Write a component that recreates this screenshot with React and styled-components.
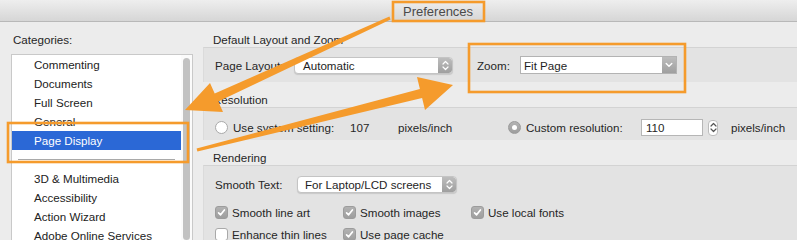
import React from 'react';
import styled, { createGlobalStyle } from 'styled-components';

const Global = createGlobalStyle`
  html, body { margin: 0; padding: 0; background: #ececec; }
  body {
    font-family: "Liberation Sans", Arial, sans-serif;
    font-size: 11.6px;
    color: #262626;
    overflow: hidden;
  }
  #root { width: 797px; height: 240px; }
`;

const Window = styled.div`
  position: relative;
  width: 797px;
  height: 240px;
  overflow: hidden;
  background: #ececec;
  display: flex;
  flex-direction: column;
`;

const TitleBar = styled.div`
  height: 22px;
  flex-shrink: 0;
  box-sizing: border-box;
  border-bottom: 1px solid #b8b8b8;
  background: linear-gradient(#eeeeee, #d6d6d6);
  display: flex;
  align-items: center;
  padding: 2px 0 0 403px;
  font-size: 13px;
  color: #4a4a4a;
`;

const Body = styled.div`
  flex: 1;
  min-height: 0;
  display: flex;
`;

const Sidebar = styled.div`
  width: 203px;
  flex-shrink: 0;
  box-sizing: border-box;
  padding-left: 11px;
  display: flex;
  flex-direction: column;
`;

const SideHeading = styled.div`
  height: 25px;
  flex-shrink: 0;
  box-sizing: border-box;
  padding: 11px 0 0 2px;
  line-height: 14px;
  margin-bottom: 7px;
`;

const List = styled.div`
  width: 182px;
  flex: 1;
  min-height: 0;
  box-sizing: border-box;
  background: #fff;
  border: 1px solid #c9c9c9;
  border-bottom: none;
  display: flex;
  overflow: hidden;
`;

const Items = styled.div`
  flex: 1;
  display: flex;
  flex-direction: column;
`;

const Item = styled.div`
  height: 19px;
  flex-shrink: 0;
  line-height: 19px;
  padding-left: 22px;
  white-space: nowrap;
  background: ${p => (p.$selected ? '#2b68d6' : 'transparent')};
  color: ${p => (p.$selected ? '#fff' : '#222')};
`;

const Separator = styled.div`
  height: 19px;
  flex-shrink: 0;
  display: flex;
  align-items: center;
  padding: 0 6px;
  &::after {
    content: '';
    flex: 1;
    height: 1px;
    background: #a9a9a9;
  }
`;

const ScrollTrack = styled.div`
  width: 11px;
  flex-shrink: 0;
  background: #fbfbfb;
  padding: 3px 0 0 2px;
  box-sizing: border-box;
`;

const ScrollThumb = styled.div`
  width: 7px;
  height: 100%;
  border-radius: 4px;
  background: #c2c2c2;
`;

const Main = styled.div`
  flex: 1;
  display: flex;
  flex-direction: column;
`;

const SectionLabel = styled.div`
  height: 25px;
  flex-shrink: 0;
  box-sizing: border-box;
  padding: 11px 0 0 10px;
  line-height: 14px;
  white-space: nowrap;
`;

const Group = styled.div`
  height: ${p => p.$h}px;
  flex-shrink: 0;
  box-sizing: border-box;
  background: #e3e3e3;
  border-top: 1px solid #d3d3d3;
  border-left: 1px solid #dbdbdb;
  padding: ${p => p.$pt || 0}px 0 0 11px;
  display: flex;
  flex-direction: column;
  justify-content: ${p => (p.$center ? 'center' : 'flex-start')};
`;

const Row = styled.div`
  display: flex;
  align-items: center;
  height: ${p => p.$h || 17}px;
  flex-shrink: 0;
  white-space: nowrap;
`;

const Cell = styled.div`
  width: ${p => p.$w}px;
  margin-left: ${p => p.$ml || 0}px;
  flex-shrink: 0;
  display: flex;
  align-items: center;
  gap: ${p => p.$gap || 0}px;
  white-space: nowrap;
`;

const SelectBox = styled.div`
  width: ${p => p.$w}px;
  height: ${p => p.$h}px;
  margin-left: ${p => p.$ml || 0}px;
  flex-shrink: 0;
  box-sizing: border-box;
  background: #fff;
  border: 1px solid ${p => (p.$square ? '#b3b3b3' : '#c4c4c4')};
  border-radius: ${p => (p.$square ? 0 : 4)}px;
  box-shadow: ${p => (p.$square ? 'none' : '0 1px 1px rgba(0,0,0,0.12)')};
  display: flex;
  align-items: stretch;
  overflow: hidden;
`;

const SelectText = styled.span`
  flex: 1;
  padding-left: ${p => p.$pl}px;
  display: flex;
  align-items: center;
  color: #1e1e1e;
`;

const SelectButton = styled.span`
  width: 14px;
  flex-shrink: 0;
  background: linear-gradient(#bdbdbd, #9f9f9f);
  border-radius: ${p => (p.$square ? '0' : '0 3px 3px 0')};
  display: flex;
  align-items: center;
  justify-content: center;
`;

const Radio = styled.span`
  width: 13px;
  height: 13px;
  box-sizing: border-box;
  border-radius: 50%;
  flex-shrink: 0;
  display: flex;
  align-items: center;
  justify-content: center;
  background: ${p => (p.$on ? 'linear-gradient(#b3b3b3,#9d9d9d)' : '#fff')};
  border: 1px solid ${p => (p.$on ? '#9a9a9a' : '#a9a9a9')};
  &::after {
    content: '';
    display: ${p => (p.$on ? 'block' : 'none')};
    width: 5px;
    height: 5px;
    border-radius: 50%;
    background: #fff;
  }
`;

const TextInput = styled.div`
  width: 62px;
  height: 17px;
  box-sizing: border-box;
  background: #fff;
  border: 1px solid #b6b6b6;
  padding-left: 4px;
  display: flex;
  align-items: center;
  flex-shrink: 0;
`;

const Stepper = styled.div`
  width: 10px;
  height: 16px;
  box-sizing: border-box;
  margin-left: 5px;
  background: #fff;
  border: 1px solid #bcbcbc;
  border-radius: 4px;
  display: flex;
  align-items: center;
  justify-content: center;
  flex-shrink: 0;
`;

const CheckGrid = styled.div`
  margin-top: 8px;
  display: grid;
  grid-template-columns: repeat(3, 128px);
  grid-auto-rows: 22px;
`;

const CheckItem = styled.div`
  display: flex;
  align-items: center;
  gap: 4px;
  white-space: nowrap;
`;

const Box = styled.span`
  width: 13px;
  height: 13px;
  box-sizing: border-box;
  border-radius: 3px;
  flex-shrink: 0;
  display: flex;
  align-items: center;
  justify-content: center;
  background: ${p => (p.$on ? 'linear-gradient(#b2b2b2,#9e9e9e)' : '#fff')};
  border: 1px solid ${p => (p.$on ? '#9c9c9c' : '#a9a9a9')};
`;

const Overlay = styled.svg`
  position: absolute;
  left: 0;
  top: 0;
  width: 797px;
  height: 240px;
  pointer-events: none;
`;

const UpDown = ({ color = '#fff' }) => (
  <svg width="7" height="11" viewBox="0 0 7 11">
    <path d="M1 4 L3.5 1.5 L6 4 M1 7 L3.5 9.5 L6 7" fill="none" stroke={color} strokeWidth="1.2" strokeLinecap="round" strokeLinejoin="round" />
  </svg>
);

const Down = () => (
  <svg width="8" height="6" viewBox="0 0 8 6">
    <path d="M1.2 1.5 L4 4.3 L6.8 1.5" fill="none" stroke="#fff" strokeWidth="1.4" strokeLinecap="round" strokeLinejoin="round" />
  </svg>
);

const Check = () => (
  <svg width="9" height="9" viewBox="0 0 9 9">
    <path d="M1.6 4.8 L3.6 6.8 L7.4 2" fill="none" stroke="#fff" strokeWidth="1.7" strokeLinecap="round" strokeLinejoin="round" />
  </svg>
);

const Select = ({ w, h, ml, pl, square, label, single }) => (
  <SelectBox $w={w} $h={h} $ml={ml} $square={square}>
    <SelectText $pl={pl}>{label}</SelectText>
    <SelectButton $square={square}>{single ? <Down /> : <UpDown />}</SelectButton>
  </SelectBox>
);

const categories = [
  { name: 'Commenting' },
  { name: 'Documents' },
  { name: 'Full Screen' },
  { name: 'General' },
  { name: 'Page Display', selected: true },
  { sep: true },
  { name: '3D & Multimedia' },
  { name: 'Accessibility' },
  { name: 'Action Wizard' },
  { name: 'Adobe Online Services' },
];

const checks = [
  { label: 'Smooth line art', on: true },
  { label: 'Smooth images', on: true },
  { label: 'Use local fonts', on: true },
  { label: 'Enhance thin lines', on: false },
  { label: 'Use page cache', on: true },
];

const ORANGE = '#f59b2c';

export default function App() {
  return (
    <>
      <Global />
      <Window>
        <TitleBar>Preferences</TitleBar>
        <Body>
          <Sidebar>
            <SideHeading>Categories:</SideHeading>
            <List>
              <Items>
                {categories.map((c, i) =>
                  c.sep ? <Separator key={i} /> : (
                    <Item key={i} $selected={c.selected}>{c.name}</Item>
                  )
                )}
              </Items>
              <ScrollTrack><ScrollThumb /></ScrollTrack>
            </List>
          </Sidebar>
          <Main>
            <SectionLabel>Default Layout and Zoom</SectionLabel>
            <Group $h={35} $center>
              <Row $h={18}>
                <Cell $w={79}>Page Layout:</Cell>
                <Select w={159} h={17} pl={8} label="Automatic" />
                <Cell $w={43} $ml={24}>Zoom:</Cell>
                <Select w={157} h={18} pl={3} square single label="Fit Page" />
              </Row>
            </Group>

            <SectionLabel>Resolution</SectionLabel>
            <Group $h={33} $pt={11}>
              <Row>
                <Cell $w={135} $gap={5}><Radio />Use system setting:</Cell>
                <Cell $w={48}>107</Cell>
                <Cell $w={110}>pixels/inch</Cell>
                <Cell $w={133} $gap={5}><Radio $on />Custom resolution:</Cell>
                <TextInput>110</TextInput>
                <Stepper><UpDown color="#555" /></Stepper>
                <Cell $w={80} $ml={13}>pixels/inch</Cell>
              </Row>
            </Group>

            <SectionLabel>Rendering</SectionLabel>
            <Group $h={80} $pt={10}>
              <Row>
                <Cell $w={82}>Smooth Text:</Cell>
                <Select w={160} h={17} pl={7} label="For Laptop/LCD screens" />
              </Row>
              <CheckGrid>
                {checks.map(c => (
                  <CheckItem key={c.label}>
                    <Box $on={c.on}>{c.on && <Check />}</Box>
                    {c.label}
                  </CheckItem>
                ))}
              </CheckGrid>
            </Group>
          </Main>
        </Body>

        <Overlay viewBox="0 0 797 240">
          <g fill="none" stroke={ORANGE} strokeWidth="2.6">
            <rect x="393" y="2" width="91" height="19" />
            <rect x="469" y="44" width="216" height="48" />
            <rect x="8" y="123" width="180" height="39" />
          </g>
          <g fill={ORANGE}>
            <polygon points="389.4,16.6 214.7,93.4 210,83 185,110 223,112 218.3,101.6 390.6,19.4" />
            <polygon points="196.6,148.5 419.9,89.1 417,77 453,85 425,110 422.1,97.9 197.4,151.5" />
          </g>
        </Overlay>
      </Window>
    </>
  );
}
